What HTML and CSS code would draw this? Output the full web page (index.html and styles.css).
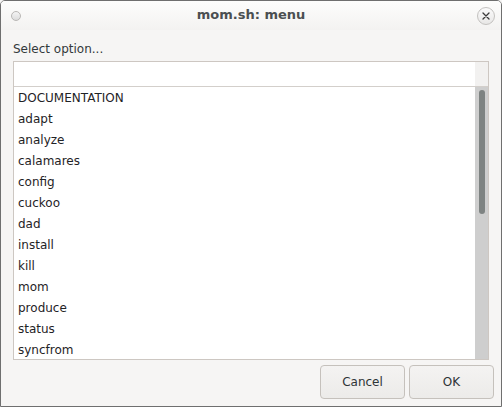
FILE: index.html
```html
<!DOCTYPE html>
<html>
<head>
<meta charset="utf-8">
<link rel="stylesheet" href="styles.css">
</head>
<body>
<div class="window">
  <div class="titlebar">
    <span class="dot"></span>
    <span class="title">mom.sh: menu</span>
    <span class="close">
      <svg width="8" height="8" viewBox="0 0 8 8"><path d="M1 1 L7 7 M7 1 L1 7" stroke="#3a3a3a" stroke-width="1.3" stroke-linecap="round"/></svg>
    </span>
  </div>
  <div class="content">
    <div class="label">Select option...</div>
    <div class="listbox">
      <div class="header">
        <div class="header-main"></div>
        <div class="header-corner"></div>
      </div>
      <div class="body">
        <ul class="items">
          <li>DOCUMENTATION</li>
          <li>adapt</li>
          <li>analyze</li>
          <li>calamares</li>
          <li>config</li>
          <li>cuckoo</li>
          <li>dad</li>
          <li>install</li>
          <li>kill</li>
          <li>mom</li>
          <li>produce</li>
          <li>status</li>
          <li>syncfrom</li>
        </ul>
        <div class="scrollbar"><div class="thumb"></div></div>
      </div>
    </div>
  </div>
  <div class="actions">
    <button class="btn">Cancel</button>
    <button class="btn">OK</button>
  </div>
</div>
</body>
</html>
```

FILE: styles.css
```css
html, body {
  margin: 0;
  padding: 0;
  background: #f6f5f4;
}
body {
  font-family: "DejaVu Sans", sans-serif;
  font-size: 12px;
  color: #2e3436;
}
.window {
  width: 502px;
  height: 407px;
  box-sizing: border-box;
  border: 1px solid #6f6f6f;
  border-radius: 5px 5px 0 0;
  background: #f6f5f4;
  display: flex;
  flex-direction: column;
  overflow: hidden;
}
.titlebar {
  height: 29px;
  flex: none;
  display: flex;
  align-items: center;
  justify-content: space-between;
  padding: 0 6px 0 10px;
  background: linear-gradient(#fdfdfc, #f3f2f1);
}
.dot {
  width: 10px;
  height: 10px;
  border-radius: 50%;
  box-sizing: border-box;
  border: 1px solid #b9b7b5;
  background: linear-gradient(#f4f4f4, #dcdcdc);
  margin-top: 0;
}
.title {
  font-weight: bold;
  font-size: 13px;
  color: #4b4f51;
  margin-left: 4px;
  margin-bottom: 2px;
}
.close {
  width: 18px;
  height: 18px;
  border-radius: 50%;
  box-sizing: border-box;
  border: 1px solid #c3c1bf;
  background: linear-gradient(#fbfbfb, #e8e7e6);
  display: flex;
  align-items: center;
  justify-content: center;
  margin-top: 1px;
}
.content {
  padding: 12px 12px 0 12px;
  flex: none;
}
.label {
  line-height: 15px;
  height: 15px;
  margin-bottom: 4px;
  color: #33393b;
}
.listbox {
  border: 1px solid #cdc7c2;
  background: #ffffff;
}
.header {
  display: flex;
  height: 24px;
  border-bottom: 1px solid #d3cfcb;
}
.header-main {
  flex: 1;
  background: #ffffff;
}
.header-corner {
  width: 13px;
  background: #f2f1f0;
}
.body {
  display: flex;
  height: 272px;
}
.items {
  list-style: none;
  margin: 0;
  padding: 1px 0 0 0;
  flex: 1;
  overflow: hidden;
}
.items li {
  height: 21px;
  line-height: 21px;
  padding-left: 4px;
  color: #1f2326;
}
.scrollbar {
  width: 13px;
  background: #cecece;
  position: relative;
}
.thumb {
  position: absolute;
  left: 4px;
  top: 3px;
  width: 6px;
  height: 124px;
  border-radius: 3px;
  background: #7e8382;
}
.actions {
  display: flex;
  justify-content: flex-end;
  gap: 4px;
  padding: 5px 7px 0 0;
}
.btn {
  width: 85px;
  height: 34px;
  box-sizing: border-box;
  border: 1px solid #c5c1bc;
  border-radius: 4px;
  background: linear-gradient(#f4f3f2, #ecebe9);
  font-family: "DejaVu Sans", sans-serif;
  font-size: 12px;
  color: #2e3436;
  padding: 0;
}
```
